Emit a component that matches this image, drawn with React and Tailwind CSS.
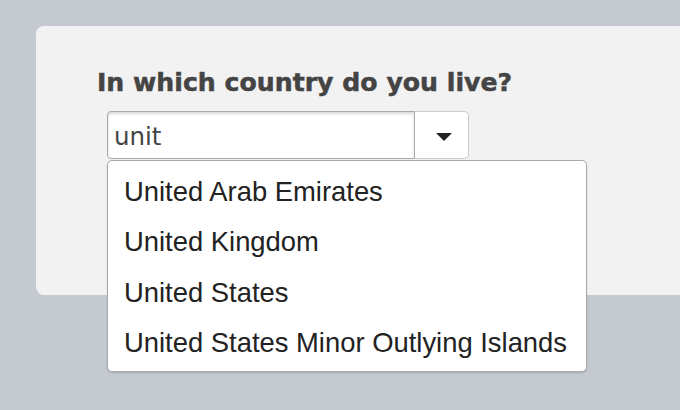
import React from "react";

const countries = [
  "United Arab Emirates",
  "United Kingdom",
  "United States",
  "United States Minor Outlying Islands",
];

export default function App() {
  return (
    <div className="w-[680px] h-[410px] bg-[#c5c9d0] pt-[26px] pl-[36px] overflow-hidden">
      <div className="h-[269px] bg-[#f2f2f2] rounded-l-[8px] pt-[42px] pl-[61px]">
        <label
          className="block text-[25.2px] leading-[30px] font-bold text-[#444] [-webkit-text-stroke:0.5px_#444]"
          style={{ fontFamily: '"DejaVu Sans", Verdana, sans-serif' }}
        >
          In which country do you live?
        </label>
        <div className="relative ml-[10px] mt-[13px] flex w-[362px]">
          <input
            readOnly
            value="unit"
            className="w-[308px] h-[48px] border border-[#aaa] rounded-l-[4px] bg-white pl-[6px] pt-[3px] text-[24.5px] text-[#444] shadow-[inset_0_2px_3px_rgba(0,0,0,0.15)] outline-none"
            style={{ fontFamily: '"DejaVu Sans", Verdana, sans-serif' }}
          />
          <button className="w-[54px] h-[48px] border border-l-0 border-[#ccc] rounded-r-[5px] bg-white flex items-center justify-center pt-[4px] pl-[4px]">
            <svg width="16" height="8" viewBox="0 0 16 8">
              <path d="M0 0 H16 L8 8 Z" fill="#222" />
            </svg>
          </button>
          <ul
            className="absolute left-0 top-[49px] w-[480px] bg-white border border-[#aaa] rounded-[5px] pt-[6px] pb-[3px] shadow-[0_1px_2px_rgba(0,0,0,0.15)]"
            style={{ fontFamily: '"Liberation Sans", Arial, sans-serif' }}
          >
            {countries.map((c) => (
              <li
                key={c}
                className="h-[50.3px] leading-[50.3px] pl-[16px] text-[27.4px] text-[#222] whitespace-nowrap"
              >
                {c}
              </li>
            ))}
          </ul>
        </div>
      </div>
    </div>
  );
}
